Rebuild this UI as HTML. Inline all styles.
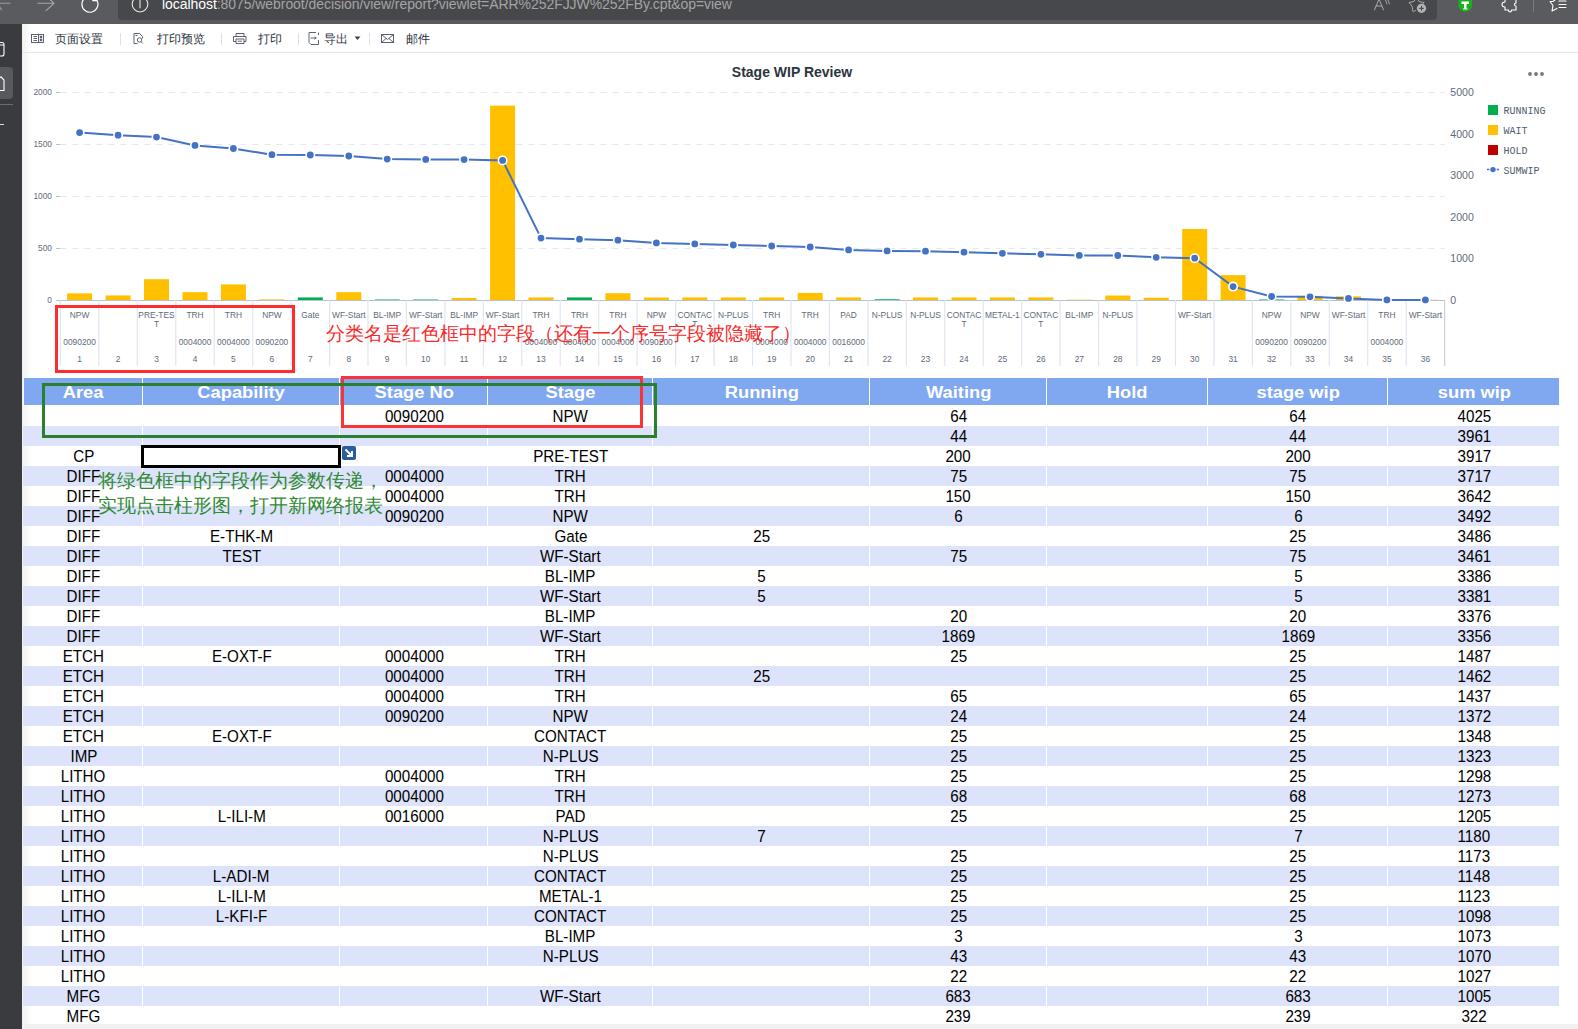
<!DOCTYPE html>
<html><head><meta charset="utf-8"><style>
html,body{margin:0;padding:0}
body{width:1578px;height:1029px;overflow:hidden;position:relative;background:#fff;font-family:"Liberation Sans", sans-serif}
.abs{position:absolute}
.hd{position:absolute;top:378px;height:27px;line-height:29px;text-align:center;color:#fff;font-weight:bold;font-size:17.2px}
.hd span{display:inline-block;transform:scaleX(1.065)}
.td{position:absolute;height:20px;line-height:21.5px;text-align:center;color:#000;font-size:15.65px}
.td span{display:inline-block;transform:scaleX(0.97)}
.tb{position:absolute;top:32px;font-size:12px;color:#2a3140;line-height:14px}
.sep{position:absolute;top:33px;width:1px;height:12px;background:#dde1e6}
</style></head><body>
<!-- browser top bar -->
<div class="abs" style="left:0;top:0;width:1578px;height:24px;background:#5a5b5e"></div>
<div class="abs" style="left:118px;top:-6px;width:1319px;height:25.5px;background:#47484b;border-radius:0 0 4px 4px"></div>
<div class="abs" style="left:162px;top:-5px;font-size:14px;line-height:18px;color:#a4a4a4;white-space:nowrap;letter-spacing:-0.06px"><span style="color:#fff">localhost</span>:8075/webroot/decision/view/report?viewlet=ARR%252FJJW%252FBy.cpt&amp;op=view</div>
<!-- sidebar -->
<div class="abs" style="left:0;top:24px;width:22px;height:1005px;background:#3a3b3e"></div>
<div class="abs" style="left:-6px;top:67px;width:19px;height:32px;background:#58595c;border-radius:4px"></div>
<div class="abs" style="left:0;top:104px;width:13px;height:1px;background:#6a6b6e"></div>
<div class="abs" style="left:0;top:124px;width:4px;height:1px;background:#ddd"></div>
<!-- page shadow -->
<div class="abs" style="left:22px;top:24px;width:10px;height:1005px;background:linear-gradient(to right,rgba(0,0,0,0.06),rgba(0,0,0,0))"></div>
<!-- toolbar -->
<div class="abs" style="left:22px;top:52px;width:1556px;height:1px;background:#e3e6ea"></div>
<div class="tb" style="left:55px">页面设置</div>
<div class="sep" style="left:120px"></div>
<div class="tb" style="left:157px">打印预览</div>
<div class="sep" style="left:221px"></div>
<div class="tb" style="left:258px">打印</div>
<div class="sep" style="left:298px"></div>
<div class="tb" style="left:324px">导出</div>
<div class="sep" style="left:369px"></div>
<div class="tb" style="left:406px">邮件</div>
<svg width="1578" height="130" style="position:absolute;left:0;top:0">
<g fill="none" stroke-linecap="round" stroke-linejoin="round">
 <!-- back -->
 <path d="M0 3.3 H10" stroke="#9c9c9e" stroke-width="1.1"/>
 <path d="M-6 -3 L1.5 10" stroke="#9c9c9e" stroke-width="1.1"/>
 <!-- forward -->
 <path d="M38 3.3 H54 M54 3.3 L46 10.6 M54 3.3 L50 -0.5" stroke="#a8a8aa" stroke-width="1.1"/>
 <!-- refresh -->
 <path d="M92 -3.5 A8 8 0 1 0 96.9 0.3" stroke="#fff" stroke-width="1.2"/>
 <path d="M92.3 -1 H97.2 V1.3 H92.3 Z" fill="#fff" stroke="none"/>
 <!-- info -->
 <circle cx="140" cy="4.2" r="7.8" stroke="#e8e8e8" stroke-width="1.1"/>
 <path d="M140 0.5 V7.8" stroke="#bdbdbd" stroke-width="1.5"/>
 <!-- A)) -->
 <path d="M1374.5 10 L1379 -1 L1383.5 10 M1376 6 H1382" stroke="#a9a9ab" stroke-width="1"/>
 <path d="M1385.5 0 L1387 4 M1388 0 L1389.5 4" stroke="#a9a9ab" stroke-width="0.9"/>
 <!-- star plus -->
 <path d="M1417 -2 L1419 1.5 L1424 2.5 L1421 6 M1413 11.5 L1412 6 L1409 2.5 L1414 1.5 L1416 -2" stroke="#a9a9ab" stroke-width="1"/>
 <path d="M1414 11.5 L1415.5 10.5" stroke="#a9a9ab" stroke-width="1"/>
 <!-- puzzle -->
 <path d="M1505 0 V2 C1503 2 1502 3 1502 4.5 C1502 6 1503 7 1505 7 V10 H1508.5 C1508.5 11.5 1509.5 12 1510 12 C1510.5 12 1511.5 11.5 1511.5 10 H1516 V6 C1515 6 1514.5 5 1514.5 4.5 C1514.5 4 1515 3 1516 3 V0" stroke="#fff" stroke-width="1.1"/>
 <!-- separator -->
 <path d="M1533.5 0 V12" stroke="#7a7b7e" stroke-width="1"/>
 <!-- star list -->
 <path d="M1556 -1 L1553 1.5 L1550 1.5 L1553 5.5 L1552 11 L1557 8.5" stroke="#fff" stroke-width="1.1"/>
 <path d="M1559 1 H1566 M1559 4.5 H1566 M1559 7.5 H1566" stroke="#fff" stroke-width="1.1"/>
</g>
 <circle cx="1421.5" cy="8.3" r="4.6" fill="#b4b4b6"/>
 <path d="M1421.5 5.8 V10.8 M1419 8.3 H1424" stroke="#444" stroke-width="1"/>
 <path d="M1458.5 0 H1472 V6 C1472 9 1468 11.5 1465.2 12 C1462.5 11.5 1458.5 9 1458.5 6 Z" fill="#1bb01b"/>
 <path d="M1461.5 1.5 H1469 V4 H1466.5 V8.5 H1467.5 V9.5 H1463 V8.5 H1464 V4 H1461.5 Z" fill="#fff"/>
 <!-- sidebar icons -->
 <path d="M-2 42.5 H2 Q4 42.5 4 44.5 V54 Q4 56 2 56 H-2 M-2 45 H4" fill="none" stroke="#fff" stroke-width="1.1"/>
 <path d="M-3 80 L1 76.8 L4 80 V90.5 H-3" fill="none" stroke="#fff" stroke-width="1.1"/>
 <!-- toolbar icons -->
 <g fill="none" stroke="#535a6a" stroke-width="0.95">
  <rect x="31.5" y="34.5" width="12" height="8"/>
  <path d="M38.5 34.5 V42.5 M33.5 36.5 H37 M33.5 38.5 H37 M33.5 40.5 H37"/>
  <rect x="40.3" y="36.3" width="1.4" height="1.4" fill="#4a5162"/><rect x="40.3" y="39.3" width="1.4" height="1.4" fill="#4a5162"/>
  <path d="M134 33.5 H139.5 L142.5 36.5 V38.5 M134 33.5 V43.5 H137.5 M135.5 35.5 H137.5"/>
  <circle cx="139.5" cy="40" r="2.2"/>
  <path d="M141.2 41.8 L142.6 43.4"/>
  <path d="M236 36 V33.5 H244 V36 M233.5 41.5 V36.5 H246 V41.5 H244 M236 41.5 H233.5 M236 39 H244 V43.5 H236 Z M237.8 41.2 H242"/>
  <path d="M316 32.5 H309 V42.5 L311 44.5 H318.5 V40 M318.5 32.5 V35 M310.5 38 H316" stroke="#5a5f6e"/>
  <path d="M314.5 36.8 L316.3 38 L314.5 39.2" stroke="#5a5f6e"/>
  <rect x="381.5" y="34.5" width="12" height="8"/>
  <path d="M381.5 34.5 L387.5 39.5 L393.5 34.5 M381.5 42.5 L386 38.5 M393.5 42.5 L389 38.5"/>
 </g>
 <path d="M354.5 36.5 H360.5 L357.5 40 Z" fill="#3d4658"/>
</svg>
<svg width="1578" height="1029" style="position:absolute;left:0;top:0">
<line x1="60.4" y1="248.5" x2="1444.6" y2="248.5" stroke="#e0e8f4" stroke-width="1" stroke-dasharray="6,6"/>
<line x1="56" y1="248.5" x2="60.4" y2="248.5" stroke="#b9c0ca" stroke-width="1"/>
<line x1="60.4" y1="196.5" x2="1444.6" y2="196.5" stroke="#e0e8f4" stroke-width="1" stroke-dasharray="6,6"/>
<line x1="56" y1="196.5" x2="60.4" y2="196.5" stroke="#b9c0ca" stroke-width="1"/>
<line x1="60.4" y1="144.5" x2="1444.6" y2="144.5" stroke="#e0e8f4" stroke-width="1" stroke-dasharray="6,6"/>
<line x1="56" y1="144.5" x2="60.4" y2="144.5" stroke="#b9c0ca" stroke-width="1"/>
<line x1="60.4" y1="92.5" x2="1444.6" y2="92.5" stroke="#e0e8f4" stroke-width="1" stroke-dasharray="6,6"/>
<line x1="56" y1="92.5" x2="60.4" y2="92.5" stroke="#b9c0ca" stroke-width="1"/>
<text transform="translate(52,303.3) scale(0.93,1)" text-anchor="end" font-size="9" fill="#5f6b7b" font-family='"Liberation Sans", sans-serif'>0</text>
<text transform="translate(52,251.3) scale(0.93,1)" text-anchor="end" font-size="9" fill="#5f6b7b" font-family='"Liberation Sans", sans-serif'>500</text>
<text transform="translate(52,199.3) scale(0.93,1)" text-anchor="end" font-size="9" fill="#5f6b7b" font-family='"Liberation Sans", sans-serif'>1000</text>
<text transform="translate(52,147.3) scale(0.93,1)" text-anchor="end" font-size="9" fill="#5f6b7b" font-family='"Liberation Sans", sans-serif'>1500</text>
<text transform="translate(52,95.3) scale(0.93,1)" text-anchor="end" font-size="9" fill="#5f6b7b" font-family='"Liberation Sans", sans-serif'>2000</text>
<text transform="translate(1450.3,303.6) scale(1.06,1)" font-size="10" fill="#5f6b7b" font-family='"Liberation Sans", sans-serif'>0</text>
<text transform="translate(1450.3,261.6) scale(1.06,1)" font-size="10" fill="#5f6b7b" font-family='"Liberation Sans", sans-serif'>1000</text>
<text transform="translate(1450.3,220.6) scale(1.06,1)" font-size="10" fill="#5f6b7b" font-family='"Liberation Sans", sans-serif'>2000</text>
<text transform="translate(1450.3,178.6) scale(1.06,1)" font-size="10" fill="#5f6b7b" font-family='"Liberation Sans", sans-serif'>3000</text>
<text transform="translate(1450.3,137.6) scale(1.06,1)" font-size="10" fill="#5f6b7b" font-family='"Liberation Sans", sans-serif'>4000</text>
<text transform="translate(1450.3,95.6) scale(1.06,1)" font-size="10" fill="#5f6b7b" font-family='"Liberation Sans", sans-serif'>5000</text>
<line x1="56" y1="300.5" x2="1444.6" y2="300.5" stroke="#b6c1d1" stroke-width="1.2"/>
<line x1="60.4" y1="300" x2="60.4" y2="366" stroke="#e0e6f1" stroke-width="1.2"/>
<line x1="98.8" y1="300" x2="98.8" y2="366" stroke="#e0e6f1" stroke-width="1.2"/>
<line x1="137.3" y1="300" x2="137.3" y2="366" stroke="#e0e6f1" stroke-width="1.2"/>
<line x1="175.8" y1="300" x2="175.8" y2="366" stroke="#e0e6f1" stroke-width="1.2"/>
<line x1="214.2" y1="300" x2="214.2" y2="366" stroke="#e0e6f1" stroke-width="1.2"/>
<line x1="252.7" y1="300" x2="252.7" y2="366" stroke="#e0e6f1" stroke-width="1.2"/>
<line x1="291.1" y1="300" x2="291.1" y2="366" stroke="#e0e6f1" stroke-width="1.2"/>
<line x1="329.6" y1="300" x2="329.6" y2="366" stroke="#e0e6f1" stroke-width="1.2"/>
<line x1="368.0" y1="300" x2="368.0" y2="366" stroke="#e0e6f1" stroke-width="1.2"/>
<line x1="406.4" y1="300" x2="406.4" y2="366" stroke="#e0e6f1" stroke-width="1.2"/>
<line x1="444.9" y1="300" x2="444.9" y2="366" stroke="#e0e6f1" stroke-width="1.2"/>
<line x1="483.4" y1="300" x2="483.4" y2="366" stroke="#e0e6f1" stroke-width="1.2"/>
<line x1="521.8" y1="300" x2="521.8" y2="366" stroke="#e0e6f1" stroke-width="1.2"/>
<line x1="560.2" y1="300" x2="560.2" y2="366" stroke="#e0e6f1" stroke-width="1.2"/>
<line x1="598.7" y1="300" x2="598.7" y2="366" stroke="#e0e6f1" stroke-width="1.2"/>
<line x1="637.1" y1="300" x2="637.1" y2="366" stroke="#e0e6f1" stroke-width="1.2"/>
<line x1="675.6" y1="300" x2="675.6" y2="366" stroke="#e0e6f1" stroke-width="1.2"/>
<line x1="714.1" y1="300" x2="714.1" y2="366" stroke="#e0e6f1" stroke-width="1.2"/>
<line x1="752.5" y1="300" x2="752.5" y2="366" stroke="#e0e6f1" stroke-width="1.2"/>
<line x1="791.0" y1="300" x2="791.0" y2="366" stroke="#e0e6f1" stroke-width="1.2"/>
<line x1="829.4" y1="300" x2="829.4" y2="366" stroke="#e0e6f1" stroke-width="1.2"/>
<line x1="867.9" y1="300" x2="867.9" y2="366" stroke="#e0e6f1" stroke-width="1.2"/>
<line x1="906.3" y1="300" x2="906.3" y2="366" stroke="#e0e6f1" stroke-width="1.2"/>
<line x1="944.8" y1="300" x2="944.8" y2="366" stroke="#e0e6f1" stroke-width="1.2"/>
<line x1="983.2" y1="300" x2="983.2" y2="366" stroke="#e0e6f1" stroke-width="1.2"/>
<line x1="1021.7" y1="300" x2="1021.7" y2="366" stroke="#e0e6f1" stroke-width="1.2"/>
<line x1="1060.1" y1="300" x2="1060.1" y2="366" stroke="#e0e6f1" stroke-width="1.2"/>
<line x1="1098.6" y1="300" x2="1098.6" y2="366" stroke="#e0e6f1" stroke-width="1.2"/>
<line x1="1137.0" y1="300" x2="1137.0" y2="366" stroke="#e0e6f1" stroke-width="1.2"/>
<line x1="1175.5" y1="300" x2="1175.5" y2="366" stroke="#e0e6f1" stroke-width="1.2"/>
<line x1="1213.9" y1="300" x2="1213.9" y2="366" stroke="#e0e6f1" stroke-width="1.2"/>
<line x1="1252.4" y1="300" x2="1252.4" y2="366" stroke="#e0e6f1" stroke-width="1.2"/>
<line x1="1290.8" y1="300" x2="1290.8" y2="366" stroke="#e0e6f1" stroke-width="1.2"/>
<line x1="1329.3" y1="300" x2="1329.3" y2="366" stroke="#e0e6f1" stroke-width="1.2"/>
<line x1="1367.7" y1="300" x2="1367.7" y2="366" stroke="#e0e6f1" stroke-width="1.2"/>
<line x1="1406.2" y1="300" x2="1406.2" y2="366" stroke="#e0e6f1" stroke-width="1.2"/>
<line x1="1444.6" y1="300" x2="1444.6" y2="366" stroke="#c9d1dd" stroke-width="1.2"/>
<rect x="67.1" y="293.34" width="25" height="6.66" fill="#ffc000"/>
<rect x="105.6" y="295.42" width="25" height="4.58" fill="#ffc000"/>
<rect x="144.0" y="279.20" width="25" height="20.80" fill="#ffc000"/>
<rect x="182.5" y="292.20" width="25" height="7.80" fill="#ffc000"/>
<rect x="220.9" y="284.40" width="25" height="15.60" fill="#ffc000"/>
<rect x="259.4" y="299.38" width="25" height="0.62" fill="#ffc000"/>
<rect x="297.8" y="297.40" width="25" height="2.60" fill="#00b050"/>
<rect x="336.3" y="292.20" width="25" height="7.80" fill="#ffc000"/>
<rect x="374.7" y="299.48" width="25" height="0.52" fill="#00b050"/>
<rect x="413.2" y="299.48" width="25" height="0.52" fill="#00b050"/>
<rect x="451.6" y="297.92" width="25" height="2.08" fill="#ffc000"/>
<rect x="490.1" y="105.62" width="25" height="194.38" fill="#ffc000"/>
<rect x="528.5" y="297.40" width="25" height="2.60" fill="#ffc000"/>
<rect x="567.0" y="297.40" width="25" height="2.60" fill="#00b050"/>
<rect x="605.4" y="293.24" width="25" height="6.76" fill="#ffc000"/>
<rect x="643.9" y="297.50" width="25" height="2.50" fill="#ffc000"/>
<rect x="682.3" y="297.40" width="25" height="2.60" fill="#ffc000"/>
<rect x="720.8" y="297.40" width="25" height="2.60" fill="#ffc000"/>
<rect x="759.2" y="297.40" width="25" height="2.60" fill="#ffc000"/>
<rect x="797.7" y="292.93" width="25" height="7.07" fill="#ffc000"/>
<rect x="836.1" y="297.40" width="25" height="2.60" fill="#ffc000"/>
<rect x="874.6" y="299.27" width="25" height="0.73" fill="#00b050"/>
<rect x="913.0" y="297.40" width="25" height="2.60" fill="#ffc000"/>
<rect x="951.5" y="297.40" width="25" height="2.60" fill="#ffc000"/>
<rect x="989.9" y="297.40" width="25" height="2.60" fill="#ffc000"/>
<rect x="1028.4" y="297.40" width="25" height="2.60" fill="#ffc000"/>
<rect x="1066.8" y="299.69" width="25" height="0.31" fill="#ffc000"/>
<rect x="1105.3" y="295.53" width="25" height="4.47" fill="#ffc000"/>
<rect x="1143.7" y="297.71" width="25" height="2.29" fill="#ffc000"/>
<rect x="1182.2" y="228.97" width="25" height="71.03" fill="#ffc000"/>
<rect x="1220.6" y="275.14" width="25" height="24.86" fill="#ffc000"/>
<rect x="1259.1" y="299.48" width="25" height="0.52" fill="#00b050"/>
<rect x="1297.5" y="295.84" width="25" height="4.16" fill="#ffc000"/>
<rect x="1336.0" y="296.36" width="25" height="3.64" fill="#ffc000"/>
<rect x="1374.4" y="299.90" width="25" height="0.10" fill="#ffc000"/>
<rect x="1412.9" y="299.79" width="25" height="0.21" fill="#ffc000"/>
<polyline points="79.6,132.6 118.1,135.2 156.5,137.1 195.0,145.4 233.4,148.5 271.9,154.7 310.3,155.0 348.8,156.0 387.2,159.1 425.7,159.4 464.1,159.6 502.6,160.4 541.0,238.1 579.5,239.2 617.9,240.2 656.4,242.9 694.8,243.9 733.3,245.0 771.7,246.0 810.2,247.0 848.6,249.9 887.1,250.9 925.5,251.2 964.0,252.2 1002.4,253.3 1040.9,254.3 1079.3,255.4 1117.8,255.5 1156.2,257.3 1194.7,258.2 1233.1,286.6 1271.6,296.5 1310.0,296.8 1348.5,298.4 1386.9,299.9 1425.4,299.9" fill="none" stroke="#4472c4" stroke-width="2"/>
<circle cx="79.6" cy="132.6" r="4.2" fill="#4472c4" stroke="#fff" stroke-width="1.6"/>
<circle cx="118.1" cy="135.2" r="4.2" fill="#4472c4" stroke="#fff" stroke-width="1.6"/>
<circle cx="156.5" cy="137.1" r="4.2" fill="#4472c4" stroke="#fff" stroke-width="1.6"/>
<circle cx="195.0" cy="145.4" r="4.2" fill="#4472c4" stroke="#fff" stroke-width="1.6"/>
<circle cx="233.4" cy="148.5" r="4.2" fill="#4472c4" stroke="#fff" stroke-width="1.6"/>
<circle cx="271.9" cy="154.7" r="4.2" fill="#4472c4" stroke="#fff" stroke-width="1.6"/>
<circle cx="310.3" cy="155.0" r="4.2" fill="#4472c4" stroke="#fff" stroke-width="1.6"/>
<circle cx="348.8" cy="156.0" r="4.2" fill="#4472c4" stroke="#fff" stroke-width="1.6"/>
<circle cx="387.2" cy="159.1" r="4.2" fill="#4472c4" stroke="#fff" stroke-width="1.6"/>
<circle cx="425.7" cy="159.4" r="4.2" fill="#4472c4" stroke="#fff" stroke-width="1.6"/>
<circle cx="464.1" cy="159.6" r="4.2" fill="#4472c4" stroke="#fff" stroke-width="1.6"/>
<circle cx="502.6" cy="160.4" r="4.2" fill="#4472c4" stroke="#fff" stroke-width="1.6"/>
<circle cx="541.0" cy="238.1" r="4.2" fill="#4472c4" stroke="#fff" stroke-width="1.6"/>
<circle cx="579.5" cy="239.2" r="4.2" fill="#4472c4" stroke="#fff" stroke-width="1.6"/>
<circle cx="617.9" cy="240.2" r="4.2" fill="#4472c4" stroke="#fff" stroke-width="1.6"/>
<circle cx="656.4" cy="242.9" r="4.2" fill="#4472c4" stroke="#fff" stroke-width="1.6"/>
<circle cx="694.8" cy="243.9" r="4.2" fill="#4472c4" stroke="#fff" stroke-width="1.6"/>
<circle cx="733.3" cy="245.0" r="4.2" fill="#4472c4" stroke="#fff" stroke-width="1.6"/>
<circle cx="771.7" cy="246.0" r="4.2" fill="#4472c4" stroke="#fff" stroke-width="1.6"/>
<circle cx="810.2" cy="247.0" r="4.2" fill="#4472c4" stroke="#fff" stroke-width="1.6"/>
<circle cx="848.6" cy="249.9" r="4.2" fill="#4472c4" stroke="#fff" stroke-width="1.6"/>
<circle cx="887.1" cy="250.9" r="4.2" fill="#4472c4" stroke="#fff" stroke-width="1.6"/>
<circle cx="925.5" cy="251.2" r="4.2" fill="#4472c4" stroke="#fff" stroke-width="1.6"/>
<circle cx="964.0" cy="252.2" r="4.2" fill="#4472c4" stroke="#fff" stroke-width="1.6"/>
<circle cx="1002.4" cy="253.3" r="4.2" fill="#4472c4" stroke="#fff" stroke-width="1.6"/>
<circle cx="1040.9" cy="254.3" r="4.2" fill="#4472c4" stroke="#fff" stroke-width="1.6"/>
<circle cx="1079.3" cy="255.4" r="4.2" fill="#4472c4" stroke="#fff" stroke-width="1.6"/>
<circle cx="1117.8" cy="255.5" r="4.2" fill="#4472c4" stroke="#fff" stroke-width="1.6"/>
<circle cx="1156.2" cy="257.3" r="4.2" fill="#4472c4" stroke="#fff" stroke-width="1.6"/>
<circle cx="1194.7" cy="258.2" r="4.2" fill="#4472c4" stroke="#fff" stroke-width="1.6"/>
<circle cx="1233.1" cy="286.6" r="4.2" fill="#4472c4" stroke="#fff" stroke-width="1.6"/>
<circle cx="1271.6" cy="296.5" r="4.2" fill="#4472c4" stroke="#fff" stroke-width="1.6"/>
<circle cx="1310.0" cy="296.8" r="4.2" fill="#4472c4" stroke="#fff" stroke-width="1.6"/>
<circle cx="1348.5" cy="298.4" r="4.2" fill="#4472c4" stroke="#fff" stroke-width="1.6"/>
<circle cx="1386.9" cy="299.9" r="4.2" fill="#4472c4" stroke="#fff" stroke-width="1.6"/>
<circle cx="1425.4" cy="299.9" r="4.2" fill="#4472c4" stroke="#fff" stroke-width="1.6"/>
<text x="79.6" y="318" text-anchor="middle" font-size="8.4" fill="#606a78" font-family='"Liberation Sans", sans-serif'>NPW</text>
<text x="79.6" y="345" text-anchor="middle" font-size="8.4" fill="#606a78" font-family='"Liberation Sans", sans-serif'>0090200</text>
<text x="79.6" y="362" text-anchor="middle" font-size="8.4" fill="#606a78" font-family='"Liberation Sans", sans-serif'>1</text>
<text x="118.1" y="362" text-anchor="middle" font-size="8.4" fill="#606a78" font-family='"Liberation Sans", sans-serif'>2</text>
<text x="156.5" y="318" text-anchor="middle" font-size="8.4" fill="#606a78" font-family='"Liberation Sans", sans-serif'>PRE-TES</text>
<text x="156.5" y="327" text-anchor="middle" font-size="8.4" fill="#606a78" font-family='"Liberation Sans", sans-serif'>T</text>
<text x="156.5" y="362" text-anchor="middle" font-size="8.4" fill="#606a78" font-family='"Liberation Sans", sans-serif'>3</text>
<text x="195.0" y="318" text-anchor="middle" font-size="8.4" fill="#606a78" font-family='"Liberation Sans", sans-serif'>TRH</text>
<text x="195.0" y="345" text-anchor="middle" font-size="8.4" fill="#606a78" font-family='"Liberation Sans", sans-serif'>0004000</text>
<text x="195.0" y="362" text-anchor="middle" font-size="8.4" fill="#606a78" font-family='"Liberation Sans", sans-serif'>4</text>
<text x="233.4" y="318" text-anchor="middle" font-size="8.4" fill="#606a78" font-family='"Liberation Sans", sans-serif'>TRH</text>
<text x="233.4" y="345" text-anchor="middle" font-size="8.4" fill="#606a78" font-family='"Liberation Sans", sans-serif'>0004000</text>
<text x="233.4" y="362" text-anchor="middle" font-size="8.4" fill="#606a78" font-family='"Liberation Sans", sans-serif'>5</text>
<text x="271.9" y="318" text-anchor="middle" font-size="8.4" fill="#606a78" font-family='"Liberation Sans", sans-serif'>NPW</text>
<text x="271.9" y="345" text-anchor="middle" font-size="8.4" fill="#606a78" font-family='"Liberation Sans", sans-serif'>0090200</text>
<text x="271.9" y="362" text-anchor="middle" font-size="8.4" fill="#606a78" font-family='"Liberation Sans", sans-serif'>6</text>
<text x="310.3" y="318" text-anchor="middle" font-size="8.4" fill="#606a78" font-family='"Liberation Sans", sans-serif'>Gate</text>
<text x="310.3" y="362" text-anchor="middle" font-size="8.4" fill="#606a78" font-family='"Liberation Sans", sans-serif'>7</text>
<text x="348.8" y="318" text-anchor="middle" font-size="8.4" fill="#606a78" font-family='"Liberation Sans", sans-serif'>WF-Start</text>
<text x="348.8" y="362" text-anchor="middle" font-size="8.4" fill="#606a78" font-family='"Liberation Sans", sans-serif'>8</text>
<text x="387.2" y="318" text-anchor="middle" font-size="8.4" fill="#606a78" font-family='"Liberation Sans", sans-serif'>BL-IMP</text>
<text x="387.2" y="362" text-anchor="middle" font-size="8.4" fill="#606a78" font-family='"Liberation Sans", sans-serif'>9</text>
<text x="425.7" y="318" text-anchor="middle" font-size="8.4" fill="#606a78" font-family='"Liberation Sans", sans-serif'>WF-Start</text>
<text x="425.7" y="362" text-anchor="middle" font-size="8.4" fill="#606a78" font-family='"Liberation Sans", sans-serif'>10</text>
<text x="464.1" y="318" text-anchor="middle" font-size="8.4" fill="#606a78" font-family='"Liberation Sans", sans-serif'>BL-IMP</text>
<text x="464.1" y="362" text-anchor="middle" font-size="8.4" fill="#606a78" font-family='"Liberation Sans", sans-serif'>11</text>
<text x="502.6" y="318" text-anchor="middle" font-size="8.4" fill="#606a78" font-family='"Liberation Sans", sans-serif'>WF-Start</text>
<text x="502.6" y="362" text-anchor="middle" font-size="8.4" fill="#606a78" font-family='"Liberation Sans", sans-serif'>12</text>
<text x="541.0" y="318" text-anchor="middle" font-size="8.4" fill="#606a78" font-family='"Liberation Sans", sans-serif'>TRH</text>
<text x="541.0" y="345" text-anchor="middle" font-size="8.4" fill="#606a78" font-family='"Liberation Sans", sans-serif'>0004000</text>
<text x="541.0" y="362" text-anchor="middle" font-size="8.4" fill="#606a78" font-family='"Liberation Sans", sans-serif'>13</text>
<text x="579.5" y="318" text-anchor="middle" font-size="8.4" fill="#606a78" font-family='"Liberation Sans", sans-serif'>TRH</text>
<text x="579.5" y="345" text-anchor="middle" font-size="8.4" fill="#606a78" font-family='"Liberation Sans", sans-serif'>0004000</text>
<text x="579.5" y="362" text-anchor="middle" font-size="8.4" fill="#606a78" font-family='"Liberation Sans", sans-serif'>14</text>
<text x="617.9" y="318" text-anchor="middle" font-size="8.4" fill="#606a78" font-family='"Liberation Sans", sans-serif'>TRH</text>
<text x="617.9" y="345" text-anchor="middle" font-size="8.4" fill="#606a78" font-family='"Liberation Sans", sans-serif'>0004000</text>
<text x="617.9" y="362" text-anchor="middle" font-size="8.4" fill="#606a78" font-family='"Liberation Sans", sans-serif'>15</text>
<text x="656.4" y="318" text-anchor="middle" font-size="8.4" fill="#606a78" font-family='"Liberation Sans", sans-serif'>NPW</text>
<text x="656.4" y="345" text-anchor="middle" font-size="8.4" fill="#606a78" font-family='"Liberation Sans", sans-serif'>0090200</text>
<text x="656.4" y="362" text-anchor="middle" font-size="8.4" fill="#606a78" font-family='"Liberation Sans", sans-serif'>16</text>
<text x="694.8" y="318" text-anchor="middle" font-size="8.4" fill="#606a78" font-family='"Liberation Sans", sans-serif'>CONTAC</text>
<text x="694.8" y="327" text-anchor="middle" font-size="8.4" fill="#606a78" font-family='"Liberation Sans", sans-serif'>T</text>
<text x="694.8" y="362" text-anchor="middle" font-size="8.4" fill="#606a78" font-family='"Liberation Sans", sans-serif'>17</text>
<text x="733.3" y="318" text-anchor="middle" font-size="8.4" fill="#606a78" font-family='"Liberation Sans", sans-serif'>N-PLUS</text>
<text x="733.3" y="362" text-anchor="middle" font-size="8.4" fill="#606a78" font-family='"Liberation Sans", sans-serif'>18</text>
<text x="771.7" y="318" text-anchor="middle" font-size="8.4" fill="#606a78" font-family='"Liberation Sans", sans-serif'>TRH</text>
<text x="771.7" y="345" text-anchor="middle" font-size="8.4" fill="#606a78" font-family='"Liberation Sans", sans-serif'>0004000</text>
<text x="771.7" y="362" text-anchor="middle" font-size="8.4" fill="#606a78" font-family='"Liberation Sans", sans-serif'>19</text>
<text x="810.2" y="318" text-anchor="middle" font-size="8.4" fill="#606a78" font-family='"Liberation Sans", sans-serif'>TRH</text>
<text x="810.2" y="345" text-anchor="middle" font-size="8.4" fill="#606a78" font-family='"Liberation Sans", sans-serif'>0004000</text>
<text x="810.2" y="362" text-anchor="middle" font-size="8.4" fill="#606a78" font-family='"Liberation Sans", sans-serif'>20</text>
<text x="848.6" y="318" text-anchor="middle" font-size="8.4" fill="#606a78" font-family='"Liberation Sans", sans-serif'>PAD</text>
<text x="848.6" y="345" text-anchor="middle" font-size="8.4" fill="#606a78" font-family='"Liberation Sans", sans-serif'>0016000</text>
<text x="848.6" y="362" text-anchor="middle" font-size="8.4" fill="#606a78" font-family='"Liberation Sans", sans-serif'>21</text>
<text x="887.1" y="318" text-anchor="middle" font-size="8.4" fill="#606a78" font-family='"Liberation Sans", sans-serif'>N-PLUS</text>
<text x="887.1" y="362" text-anchor="middle" font-size="8.4" fill="#606a78" font-family='"Liberation Sans", sans-serif'>22</text>
<text x="925.5" y="318" text-anchor="middle" font-size="8.4" fill="#606a78" font-family='"Liberation Sans", sans-serif'>N-PLUS</text>
<text x="925.5" y="362" text-anchor="middle" font-size="8.4" fill="#606a78" font-family='"Liberation Sans", sans-serif'>23</text>
<text x="964.0" y="318" text-anchor="middle" font-size="8.4" fill="#606a78" font-family='"Liberation Sans", sans-serif'>CONTAC</text>
<text x="964.0" y="327" text-anchor="middle" font-size="8.4" fill="#606a78" font-family='"Liberation Sans", sans-serif'>T</text>
<text x="964.0" y="362" text-anchor="middle" font-size="8.4" fill="#606a78" font-family='"Liberation Sans", sans-serif'>24</text>
<text x="1002.4" y="318" text-anchor="middle" font-size="8.4" fill="#606a78" font-family='"Liberation Sans", sans-serif'>METAL-1</text>
<text x="1002.4" y="362" text-anchor="middle" font-size="8.4" fill="#606a78" font-family='"Liberation Sans", sans-serif'>25</text>
<text x="1040.9" y="318" text-anchor="middle" font-size="8.4" fill="#606a78" font-family='"Liberation Sans", sans-serif'>CONTAC</text>
<text x="1040.9" y="327" text-anchor="middle" font-size="8.4" fill="#606a78" font-family='"Liberation Sans", sans-serif'>T</text>
<text x="1040.9" y="362" text-anchor="middle" font-size="8.4" fill="#606a78" font-family='"Liberation Sans", sans-serif'>26</text>
<text x="1079.3" y="318" text-anchor="middle" font-size="8.4" fill="#606a78" font-family='"Liberation Sans", sans-serif'>BL-IMP</text>
<text x="1079.3" y="362" text-anchor="middle" font-size="8.4" fill="#606a78" font-family='"Liberation Sans", sans-serif'>27</text>
<text x="1117.8" y="318" text-anchor="middle" font-size="8.4" fill="#606a78" font-family='"Liberation Sans", sans-serif'>N-PLUS</text>
<text x="1117.8" y="362" text-anchor="middle" font-size="8.4" fill="#606a78" font-family='"Liberation Sans", sans-serif'>28</text>
<text x="1156.2" y="362" text-anchor="middle" font-size="8.4" fill="#606a78" font-family='"Liberation Sans", sans-serif'>29</text>
<text x="1194.7" y="318" text-anchor="middle" font-size="8.4" fill="#606a78" font-family='"Liberation Sans", sans-serif'>WF-Start</text>
<text x="1194.7" y="362" text-anchor="middle" font-size="8.4" fill="#606a78" font-family='"Liberation Sans", sans-serif'>30</text>
<text x="1233.1" y="362" text-anchor="middle" font-size="8.4" fill="#606a78" font-family='"Liberation Sans", sans-serif'>31</text>
<text x="1271.6" y="318" text-anchor="middle" font-size="8.4" fill="#606a78" font-family='"Liberation Sans", sans-serif'>NPW</text>
<text x="1271.6" y="345" text-anchor="middle" font-size="8.4" fill="#606a78" font-family='"Liberation Sans", sans-serif'>0090200</text>
<text x="1271.6" y="362" text-anchor="middle" font-size="8.4" fill="#606a78" font-family='"Liberation Sans", sans-serif'>32</text>
<text x="1310.0" y="318" text-anchor="middle" font-size="8.4" fill="#606a78" font-family='"Liberation Sans", sans-serif'>NPW</text>
<text x="1310.0" y="345" text-anchor="middle" font-size="8.4" fill="#606a78" font-family='"Liberation Sans", sans-serif'>0090200</text>
<text x="1310.0" y="362" text-anchor="middle" font-size="8.4" fill="#606a78" font-family='"Liberation Sans", sans-serif'>33</text>
<text x="1348.5" y="318" text-anchor="middle" font-size="8.4" fill="#606a78" font-family='"Liberation Sans", sans-serif'>WF-Start</text>
<text x="1348.5" y="362" text-anchor="middle" font-size="8.4" fill="#606a78" font-family='"Liberation Sans", sans-serif'>34</text>
<text x="1386.9" y="318" text-anchor="middle" font-size="8.4" fill="#606a78" font-family='"Liberation Sans", sans-serif'>TRH</text>
<text x="1386.9" y="345" text-anchor="middle" font-size="8.4" fill="#606a78" font-family='"Liberation Sans", sans-serif'>0004000</text>
<text x="1386.9" y="362" text-anchor="middle" font-size="8.4" fill="#606a78" font-family='"Liberation Sans", sans-serif'>35</text>
<text x="1425.4" y="318" text-anchor="middle" font-size="8.4" fill="#606a78" font-family='"Liberation Sans", sans-serif'>WF-Start</text>
<text x="1425.4" y="362" text-anchor="middle" font-size="8.4" fill="#606a78" font-family='"Liberation Sans", sans-serif'>36</text>
<text x="792" y="77" text-anchor="middle" font-size="14" font-weight="bold" fill="#2b3440" font-family='"Liberation Sans", sans-serif'>Stage WIP Review</text>
<circle cx="1530" cy="74" r="1.9" fill="#777"/>
<circle cx="1536" cy="74" r="1.9" fill="#777"/>
<circle cx="1542" cy="74" r="1.9" fill="#777"/>
<rect x="1488" y="105" width="10" height="10" fill="#00b050"/>
<text transform="translate(1503.5,114) scale(1,1.18)" font-size="10" fill="#4e5c6d" font-family='"Liberation Mono", monospace'>RUNNING</text>
<rect x="1488" y="125" width="10" height="10" fill="#ffc000"/>
<text transform="translate(1503.5,134) scale(1,1.18)" font-size="10" fill="#4e5c6d" font-family='"Liberation Mono", monospace'>WAIT</text>
<rect x="1488" y="145" width="10" height="10" fill="#c00000"/>
<text transform="translate(1503.5,154) scale(1,1.18)" font-size="10" fill="#4e5c6d" font-family='"Liberation Mono", monospace'>HOLD</text>
<path d="M1487 169.6 H1489.3 M1496.7 169.6 H1499" stroke="#4472c4" stroke-width="1.5"/>
<circle cx="1493" cy="169.6" r="2.7" fill="#4472c4"/>
<text transform="translate(1503.5,174) scale(1,1.18)" font-size="10" fill="#4e5c6d" font-family='"Liberation Mono", monospace'>SUMWIP</text>
</svg>
<div style="position:absolute;left:24px;top:378px;width:1535px;height:27px;background:#80a8f0"></div>
<div class="hd" style="left:24px;width:119px"><span>Area</span></div>
<div class="hd" style="left:143px;width:197px"><span>Capability</span></div>
<div class="hd" style="left:340px;width:148px"><span>Stage No</span></div>
<div class="hd" style="left:488px;width:165px"><span>Stage</span></div>
<div class="hd" style="left:653px;width:217px"><span>Running</span></div>
<div class="hd" style="left:870px;width:177px"><span>Waiting</span></div>
<div class="hd" style="left:1047px;width:161px"><span>Hold</span></div>
<div class="hd" style="left:1208px;width:180px"><span>stage wip</span></div>
<div class="hd" style="left:1388px;width:172px"><span>sum wip</span></div>
<div class="td" style="left:340px;width:148px;top:406px"><span>0090200</span></div>
<div class="td" style="left:488px;width:165px;top:406px"><span>NPW</span></div>
<div class="td" style="left:870px;width:177px;top:406px"><span>64</span></div>
<div class="td" style="left:1208px;width:180px;top:406px"><span>64</span></div>
<div class="td" style="left:1388px;width:172px;top:406px"><span>4025</span></div>
<div style="position:absolute;left:23px;top:426px;width:1536px;height:20px;background:#dde3fa"></div>
<div class="td" style="left:870px;width:177px;top:426px"><span>44</span></div>
<div class="td" style="left:1208px;width:180px;top:426px"><span>44</span></div>
<div class="td" style="left:1388px;width:172px;top:426px"><span>3961</span></div>
<div class="td" style="left:24px;width:119px;top:446px"><span>CP</span></div>
<div class="td" style="left:488px;width:165px;top:446px"><span>PRE-TEST</span></div>
<div class="td" style="left:870px;width:177px;top:446px"><span>200</span></div>
<div class="td" style="left:1208px;width:180px;top:446px"><span>200</span></div>
<div class="td" style="left:1388px;width:172px;top:446px"><span>3917</span></div>
<div style="position:absolute;left:23px;top:466px;width:1536px;height:20px;background:#dde3fa"></div>
<div class="td" style="left:24px;width:119px;top:466px"><span>DIFF</span></div>
<div class="td" style="left:340px;width:148px;top:466px"><span>0004000</span></div>
<div class="td" style="left:488px;width:165px;top:466px"><span>TRH</span></div>
<div class="td" style="left:870px;width:177px;top:466px"><span>75</span></div>
<div class="td" style="left:1208px;width:180px;top:466px"><span>75</span></div>
<div class="td" style="left:1388px;width:172px;top:466px"><span>3717</span></div>
<div class="td" style="left:24px;width:119px;top:486px"><span>DIFF</span></div>
<div class="td" style="left:340px;width:148px;top:486px"><span>0004000</span></div>
<div class="td" style="left:488px;width:165px;top:486px"><span>TRH</span></div>
<div class="td" style="left:870px;width:177px;top:486px"><span>150</span></div>
<div class="td" style="left:1208px;width:180px;top:486px"><span>150</span></div>
<div class="td" style="left:1388px;width:172px;top:486px"><span>3642</span></div>
<div style="position:absolute;left:23px;top:506px;width:1536px;height:20px;background:#dde3fa"></div>
<div class="td" style="left:24px;width:119px;top:506px"><span>DIFF</span></div>
<div class="td" style="left:340px;width:148px;top:506px"><span>0090200</span></div>
<div class="td" style="left:488px;width:165px;top:506px"><span>NPW</span></div>
<div class="td" style="left:870px;width:177px;top:506px"><span>6</span></div>
<div class="td" style="left:1208px;width:180px;top:506px"><span>6</span></div>
<div class="td" style="left:1388px;width:172px;top:506px"><span>3492</span></div>
<div class="td" style="left:24px;width:119px;top:526px"><span>DIFF</span></div>
<div class="td" style="left:143px;width:197px;top:526px"><span>E-THK-M</span></div>
<div class="td" style="left:488px;width:165px;top:526px"><span>Gate</span></div>
<div class="td" style="left:653px;width:217px;top:526px"><span>25</span></div>
<div class="td" style="left:1208px;width:180px;top:526px"><span>25</span></div>
<div class="td" style="left:1388px;width:172px;top:526px"><span>3486</span></div>
<div style="position:absolute;left:23px;top:546px;width:1536px;height:20px;background:#dde3fa"></div>
<div class="td" style="left:24px;width:119px;top:546px"><span>DIFF</span></div>
<div class="td" style="left:143px;width:197px;top:546px"><span>TEST</span></div>
<div class="td" style="left:488px;width:165px;top:546px"><span>WF-Start</span></div>
<div class="td" style="left:870px;width:177px;top:546px"><span>75</span></div>
<div class="td" style="left:1208px;width:180px;top:546px"><span>75</span></div>
<div class="td" style="left:1388px;width:172px;top:546px"><span>3461</span></div>
<div class="td" style="left:24px;width:119px;top:566px"><span>DIFF</span></div>
<div class="td" style="left:488px;width:165px;top:566px"><span>BL-IMP</span></div>
<div class="td" style="left:653px;width:217px;top:566px"><span>5</span></div>
<div class="td" style="left:1208px;width:180px;top:566px"><span>5</span></div>
<div class="td" style="left:1388px;width:172px;top:566px"><span>3386</span></div>
<div style="position:absolute;left:23px;top:586px;width:1536px;height:20px;background:#dde3fa"></div>
<div class="td" style="left:24px;width:119px;top:586px"><span>DIFF</span></div>
<div class="td" style="left:488px;width:165px;top:586px"><span>WF-Start</span></div>
<div class="td" style="left:653px;width:217px;top:586px"><span>5</span></div>
<div class="td" style="left:1208px;width:180px;top:586px"><span>5</span></div>
<div class="td" style="left:1388px;width:172px;top:586px"><span>3381</span></div>
<div class="td" style="left:24px;width:119px;top:606px"><span>DIFF</span></div>
<div class="td" style="left:488px;width:165px;top:606px"><span>BL-IMP</span></div>
<div class="td" style="left:870px;width:177px;top:606px"><span>20</span></div>
<div class="td" style="left:1208px;width:180px;top:606px"><span>20</span></div>
<div class="td" style="left:1388px;width:172px;top:606px"><span>3376</span></div>
<div style="position:absolute;left:23px;top:626px;width:1536px;height:20px;background:#dde3fa"></div>
<div class="td" style="left:24px;width:119px;top:626px"><span>DIFF</span></div>
<div class="td" style="left:488px;width:165px;top:626px"><span>WF-Start</span></div>
<div class="td" style="left:870px;width:177px;top:626px"><span>1869</span></div>
<div class="td" style="left:1208px;width:180px;top:626px"><span>1869</span></div>
<div class="td" style="left:1388px;width:172px;top:626px"><span>3356</span></div>
<div class="td" style="left:24px;width:119px;top:646px"><span>ETCH</span></div>
<div class="td" style="left:143px;width:197px;top:646px"><span>E-OXT-F</span></div>
<div class="td" style="left:340px;width:148px;top:646px"><span>0004000</span></div>
<div class="td" style="left:488px;width:165px;top:646px"><span>TRH</span></div>
<div class="td" style="left:870px;width:177px;top:646px"><span>25</span></div>
<div class="td" style="left:1208px;width:180px;top:646px"><span>25</span></div>
<div class="td" style="left:1388px;width:172px;top:646px"><span>1487</span></div>
<div style="position:absolute;left:23px;top:666px;width:1536px;height:20px;background:#dde3fa"></div>
<div class="td" style="left:24px;width:119px;top:666px"><span>ETCH</span></div>
<div class="td" style="left:340px;width:148px;top:666px"><span>0004000</span></div>
<div class="td" style="left:488px;width:165px;top:666px"><span>TRH</span></div>
<div class="td" style="left:653px;width:217px;top:666px"><span>25</span></div>
<div class="td" style="left:1208px;width:180px;top:666px"><span>25</span></div>
<div class="td" style="left:1388px;width:172px;top:666px"><span>1462</span></div>
<div class="td" style="left:24px;width:119px;top:686px"><span>ETCH</span></div>
<div class="td" style="left:340px;width:148px;top:686px"><span>0004000</span></div>
<div class="td" style="left:488px;width:165px;top:686px"><span>TRH</span></div>
<div class="td" style="left:870px;width:177px;top:686px"><span>65</span></div>
<div class="td" style="left:1208px;width:180px;top:686px"><span>65</span></div>
<div class="td" style="left:1388px;width:172px;top:686px"><span>1437</span></div>
<div style="position:absolute;left:23px;top:706px;width:1536px;height:20px;background:#dde3fa"></div>
<div class="td" style="left:24px;width:119px;top:706px"><span>ETCH</span></div>
<div class="td" style="left:340px;width:148px;top:706px"><span>0090200</span></div>
<div class="td" style="left:488px;width:165px;top:706px"><span>NPW</span></div>
<div class="td" style="left:870px;width:177px;top:706px"><span>24</span></div>
<div class="td" style="left:1208px;width:180px;top:706px"><span>24</span></div>
<div class="td" style="left:1388px;width:172px;top:706px"><span>1372</span></div>
<div class="td" style="left:24px;width:119px;top:726px"><span>ETCH</span></div>
<div class="td" style="left:143px;width:197px;top:726px"><span>E-OXT-F</span></div>
<div class="td" style="left:488px;width:165px;top:726px"><span>CONTACT</span></div>
<div class="td" style="left:870px;width:177px;top:726px"><span>25</span></div>
<div class="td" style="left:1208px;width:180px;top:726px"><span>25</span></div>
<div class="td" style="left:1388px;width:172px;top:726px"><span>1348</span></div>
<div style="position:absolute;left:23px;top:746px;width:1536px;height:20px;background:#dde3fa"></div>
<div class="td" style="left:24px;width:119px;top:746px"><span>IMP</span></div>
<div class="td" style="left:488px;width:165px;top:746px"><span>N-PLUS</span></div>
<div class="td" style="left:870px;width:177px;top:746px"><span>25</span></div>
<div class="td" style="left:1208px;width:180px;top:746px"><span>25</span></div>
<div class="td" style="left:1388px;width:172px;top:746px"><span>1323</span></div>
<div class="td" style="left:24px;width:119px;top:766px"><span>LITHO</span></div>
<div class="td" style="left:340px;width:148px;top:766px"><span>0004000</span></div>
<div class="td" style="left:488px;width:165px;top:766px"><span>TRH</span></div>
<div class="td" style="left:870px;width:177px;top:766px"><span>25</span></div>
<div class="td" style="left:1208px;width:180px;top:766px"><span>25</span></div>
<div class="td" style="left:1388px;width:172px;top:766px"><span>1298</span></div>
<div style="position:absolute;left:23px;top:786px;width:1536px;height:20px;background:#dde3fa"></div>
<div class="td" style="left:24px;width:119px;top:786px"><span>LITHO</span></div>
<div class="td" style="left:340px;width:148px;top:786px"><span>0004000</span></div>
<div class="td" style="left:488px;width:165px;top:786px"><span>TRH</span></div>
<div class="td" style="left:870px;width:177px;top:786px"><span>68</span></div>
<div class="td" style="left:1208px;width:180px;top:786px"><span>68</span></div>
<div class="td" style="left:1388px;width:172px;top:786px"><span>1273</span></div>
<div class="td" style="left:24px;width:119px;top:806px"><span>LITHO</span></div>
<div class="td" style="left:143px;width:197px;top:806px"><span>L-ILI-M</span></div>
<div class="td" style="left:340px;width:148px;top:806px"><span>0016000</span></div>
<div class="td" style="left:488px;width:165px;top:806px"><span>PAD</span></div>
<div class="td" style="left:870px;width:177px;top:806px"><span>25</span></div>
<div class="td" style="left:1208px;width:180px;top:806px"><span>25</span></div>
<div class="td" style="left:1388px;width:172px;top:806px"><span>1205</span></div>
<div style="position:absolute;left:23px;top:826px;width:1536px;height:20px;background:#dde3fa"></div>
<div class="td" style="left:24px;width:119px;top:826px"><span>LITHO</span></div>
<div class="td" style="left:488px;width:165px;top:826px"><span>N-PLUS</span></div>
<div class="td" style="left:653px;width:217px;top:826px"><span>7</span></div>
<div class="td" style="left:1208px;width:180px;top:826px"><span>7</span></div>
<div class="td" style="left:1388px;width:172px;top:826px"><span>1180</span></div>
<div class="td" style="left:24px;width:119px;top:846px"><span>LITHO</span></div>
<div class="td" style="left:488px;width:165px;top:846px"><span>N-PLUS</span></div>
<div class="td" style="left:870px;width:177px;top:846px"><span>25</span></div>
<div class="td" style="left:1208px;width:180px;top:846px"><span>25</span></div>
<div class="td" style="left:1388px;width:172px;top:846px"><span>1173</span></div>
<div style="position:absolute;left:23px;top:866px;width:1536px;height:20px;background:#dde3fa"></div>
<div class="td" style="left:24px;width:119px;top:866px"><span>LITHO</span></div>
<div class="td" style="left:143px;width:197px;top:866px"><span>L-ADI-M</span></div>
<div class="td" style="left:488px;width:165px;top:866px"><span>CONTACT</span></div>
<div class="td" style="left:870px;width:177px;top:866px"><span>25</span></div>
<div class="td" style="left:1208px;width:180px;top:866px"><span>25</span></div>
<div class="td" style="left:1388px;width:172px;top:866px"><span>1148</span></div>
<div class="td" style="left:24px;width:119px;top:886px"><span>LITHO</span></div>
<div class="td" style="left:143px;width:197px;top:886px"><span>L-ILI-M</span></div>
<div class="td" style="left:488px;width:165px;top:886px"><span>METAL-1</span></div>
<div class="td" style="left:870px;width:177px;top:886px"><span>25</span></div>
<div class="td" style="left:1208px;width:180px;top:886px"><span>25</span></div>
<div class="td" style="left:1388px;width:172px;top:886px"><span>1123</span></div>
<div style="position:absolute;left:23px;top:906px;width:1536px;height:20px;background:#dde3fa"></div>
<div class="td" style="left:24px;width:119px;top:906px"><span>LITHO</span></div>
<div class="td" style="left:143px;width:197px;top:906px"><span>L-KFI-F</span></div>
<div class="td" style="left:488px;width:165px;top:906px"><span>CONTACT</span></div>
<div class="td" style="left:870px;width:177px;top:906px"><span>25</span></div>
<div class="td" style="left:1208px;width:180px;top:906px"><span>25</span></div>
<div class="td" style="left:1388px;width:172px;top:906px"><span>1098</span></div>
<div class="td" style="left:24px;width:119px;top:926px"><span>LITHO</span></div>
<div class="td" style="left:488px;width:165px;top:926px"><span>BL-IMP</span></div>
<div class="td" style="left:870px;width:177px;top:926px"><span>3</span></div>
<div class="td" style="left:1208px;width:180px;top:926px"><span>3</span></div>
<div class="td" style="left:1388px;width:172px;top:926px"><span>1073</span></div>
<div style="position:absolute;left:23px;top:946px;width:1536px;height:20px;background:#dde3fa"></div>
<div class="td" style="left:24px;width:119px;top:946px"><span>LITHO</span></div>
<div class="td" style="left:488px;width:165px;top:946px"><span>N-PLUS</span></div>
<div class="td" style="left:870px;width:177px;top:946px"><span>43</span></div>
<div class="td" style="left:1208px;width:180px;top:946px"><span>43</span></div>
<div class="td" style="left:1388px;width:172px;top:946px"><span>1070</span></div>
<div class="td" style="left:24px;width:119px;top:966px"><span>LITHO</span></div>
<div class="td" style="left:870px;width:177px;top:966px"><span>22</span></div>
<div class="td" style="left:1208px;width:180px;top:966px"><span>22</span></div>
<div class="td" style="left:1388px;width:172px;top:966px"><span>1027</span></div>
<div style="position:absolute;left:23px;top:986px;width:1536px;height:20px;background:#dde3fa"></div>
<div class="td" style="left:24px;width:119px;top:986px"><span>MFG</span></div>
<div class="td" style="left:488px;width:165px;top:986px"><span>WF-Start</span></div>
<div class="td" style="left:870px;width:177px;top:986px"><span>683</span></div>
<div class="td" style="left:1208px;width:180px;top:986px"><span>683</span></div>
<div class="td" style="left:1388px;width:172px;top:986px"><span>1005</span></div>
<div class="td" style="left:24px;width:119px;top:1006px"><span>MFG</span></div>
<div class="td" style="left:870px;width:177px;top:1006px"><span>239</span></div>
<div class="td" style="left:1208px;width:180px;top:1006px"><span>239</span></div>
<div class="td" style="left:1388px;width:172px;top:1006px"><span>322</span></div>
<div style="position:absolute;left:142px;top:378px;width:1px;height:651px;background:#fff"></div>
<div style="position:absolute;left:339px;top:378px;width:1px;height:651px;background:#fff"></div>
<div style="position:absolute;left:487px;top:378px;width:1px;height:651px;background:#fff"></div>
<div style="position:absolute;left:652px;top:378px;width:1px;height:651px;background:#fff"></div>
<div style="position:absolute;left:869px;top:378px;width:1px;height:651px;background:#fff"></div>
<div style="position:absolute;left:1046px;top:378px;width:1px;height:651px;background:#fff"></div>
<div style="position:absolute;left:1207px;top:378px;width:1px;height:651px;background:#fff"></div>
<div style="position:absolute;left:1387px;top:378px;width:1px;height:651px;background:#fff"></div>
<!-- bottom scrollbar strip -->
<div class="abs" style="left:24px;top:1024px;width:1554px;height:5px;background:#f1f1f1;border-radius:4px 0 0 0"></div>
<!-- annotations -->
<div class="abs" style="left:55px;top:305px;width:234px;height:62px;border:3px solid #fe2c2c"></div>
<div class="abs" style="left:326px;top:321px;font-size:18.8px;line-height:26px;color:#f52a2a;white-space:nowrap">分类名是红色框中的字段（还有一个序号字段被隐藏了）</div>
<div class="abs" style="left:341px;top:376px;width:296px;height:46px;border:3px solid #fa3434"></div>
<div class="abs" style="left:42px;top:383px;width:609px;height:49px;border:3px solid #2c7f2c"></div>
<div class="abs" style="left:141px;top:445px;width:194px;height:17px;border:3px solid #000"></div>
<svg class="abs" style="left:342px;top:446px" width="14" height="14"><rect width="14" height="14" rx="2" fill="#2a5d9a"/><path d="M3.5 3.5 L10 10 M10 5 V10 H5" stroke="#fff" stroke-width="2" fill="none"/></svg>
<div class="abs" style="left:98px;top:467.5px;font-size:19px;line-height:25.5px;color:#2f8a32;white-space:nowrap">将绿色框中的字段作为参数传递，<br>实现点击柱形图，打开新网络报表</div>
</body></html>
